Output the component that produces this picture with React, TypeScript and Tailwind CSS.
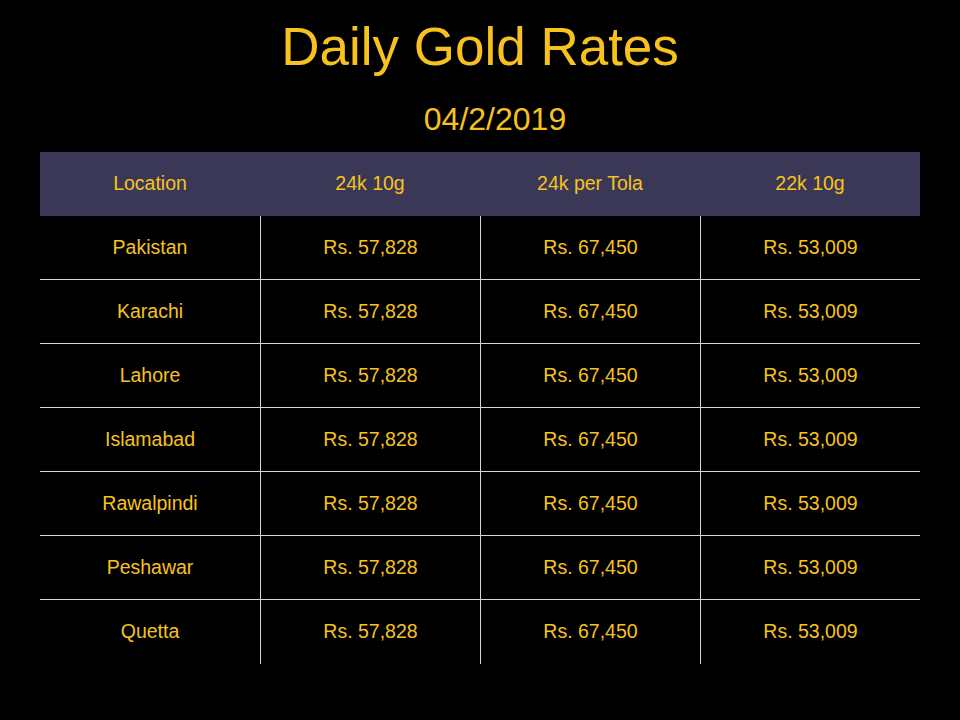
const rows = ["Pakistan", "Karachi", "Lahore", "Islamabad", "Rawalpindi", "Peshawar", "Quetta"]
const headers = ["Location", "24k 10g", "24k per Tola", "22k 10g"]

export default function App() {
  return (
    <div className="w-[960px] h-[720px] bg-black text-[#f7c21e] overflow-hidden" style={{ fontFamily: '"Liberation Sans", Arial, sans-serif' }}>
      <h1 className="pt-[20px] text-center text-[53px] leading-none">Daily Gold Rates</h1>
      <p className="mt-[30px] pl-[30px] text-center text-[32px] leading-none">04/2/2019</p>

      <div className="ml-[40px] mt-[17px] w-[880px]">
        <div className="grid grid-cols-4 h-[64px] bg-[#3a3856]">
          {headers.map((h) => (
            <div key={h} className="flex items-center justify-center text-[19.5px]">{h}</div>
          ))}
        </div>
        {rows.map((city, i) => (
          <div key={city} className={`grid grid-cols-4 h-[64px] ${i < rows.length - 1 ? "border-b border-[#d6d6d6]" : ""}`}>
            <div className="flex items-center justify-center text-[19.5px]">{city}</div>
            <div className="flex items-center justify-center text-[19.5px] border-l border-[#d6d6d6]">Rs. 57,828</div>
            <div className="flex items-center justify-center text-[19.5px] border-l border-[#d6d6d6]">Rs. 67,450</div>
            <div className="flex items-center justify-center text-[19.5px] border-l border-[#d6d6d6]">Rs. 53,009</div>
          </div>
        ))}
      </div>
    </div>
  )
}
